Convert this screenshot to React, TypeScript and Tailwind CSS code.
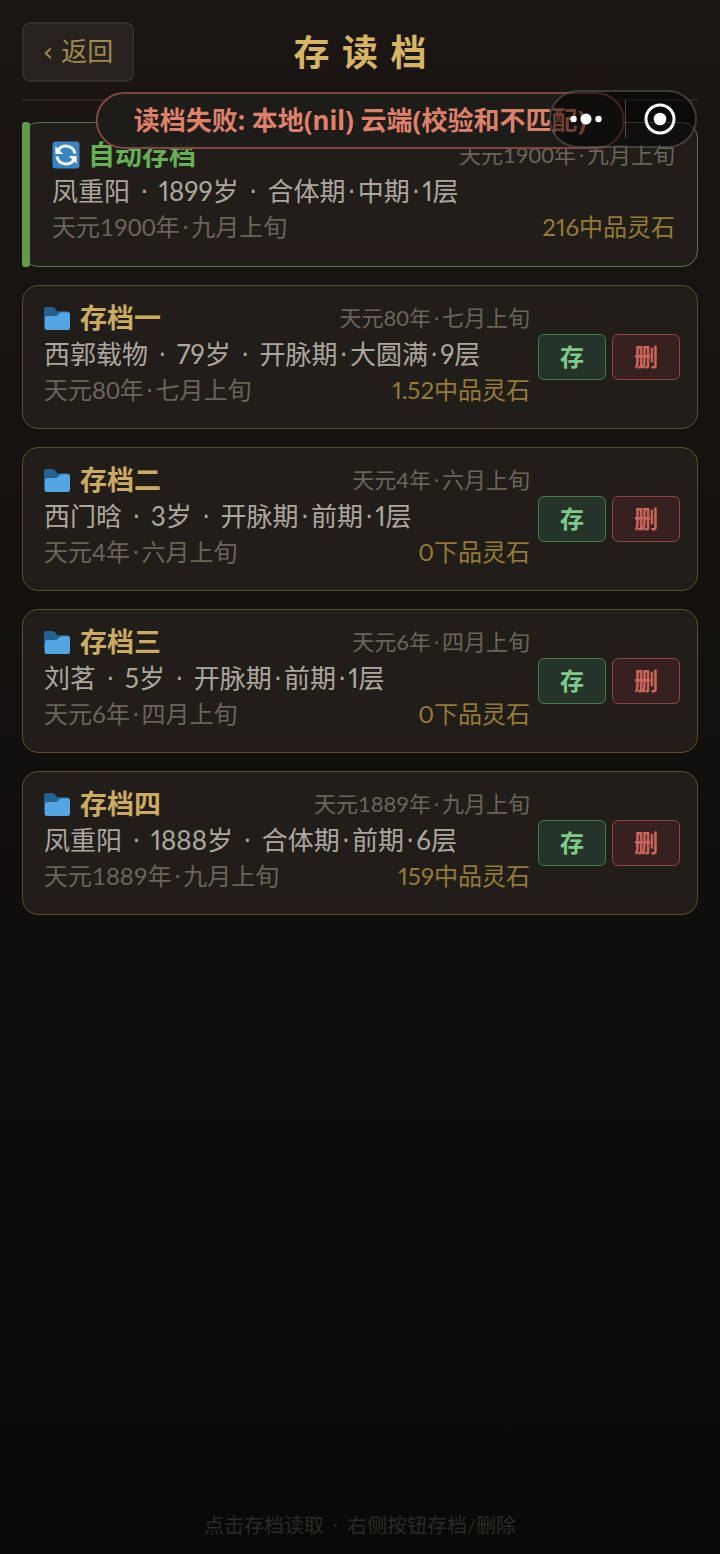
import React from "react";

interface SaveSlot {
  id: number;
  title: string;
  date: string;
  summary: string;
  money: string;
}

const AUTO_SAVE: SaveSlot = {
  id: 0,
  title: "自动存档",
  date: "天元1900年·九月上旬",
  summary: "凤重阳 · 1899岁 · 合体期·中期·1层",
  money: "216中品灵石",
};

const SLOTS: SaveSlot[] = [
  {
    id: 1,
    title: "存档一",
    date: "天元80年·七月上旬",
    summary: "西郭载物 · 79岁 · 开脉期·大圆满·9层",
    money: "1.52中品灵石",
  },
  {
    id: 2,
    title: "存档二",
    date: "天元4年·六月上旬",
    summary: "西门晗 · 3岁 · 开脉期·前期·1层",
    money: "0下品灵石",
  },
  {
    id: 3,
    title: "存档三",
    date: "天元6年·四月上旬",
    summary: "刘茗 · 5岁 · 开脉期·前期·1层",
    money: "0下品灵石",
  },
  {
    id: 4,
    title: "存档四",
    date: "天元1889年·九月上旬",
    summary: "凤重阳 · 1888岁 · 合体期·前期·6层",
    money: "159中品灵石",
  },
];

function SyncIcon() {
  return (
    <svg className="h-7 w-7 shrink-0" viewBox="0 0 28 28" fill="none" aria-hidden="true">
      <rect x="0.5" y="0.5" width="27" height="27" rx="3" fill="#3b84c4" />
      <path d="M5.6 10.4A9.2 9.2 0 0 1 23 12.6" stroke="#f1f5f8" strokeWidth="3" />
      <path d="M22.4 17.6A9.2 9.2 0 0 1 5 15.4" stroke="#f1f5f8" strokeWidth="3" />
      <path d="M3.4 5V13H11.4Z" fill="#f1f5f8" />
      <path d="M24.6 23V15H16.6Z" fill="#f1f5f8" />
    </svg>
  );
}

function FolderIcon() {
  return (
    <svg className="h-7 w-7 shrink-0" viewBox="0 0 28 28" aria-hidden="true">
      <path
        d="M0 5.5Q0 3 2.5 3H8.5Q10.4 3 11.4 4.8L13 7.2H23Q26 7.2 26 10V20H0Z"
        fill="#25608f"
      />
      <path
        d="M1 14.5Q1 12 3.5 12H11.5Q13.2 12 14.2 10.4Q15.6 8.2 18 8.2H23.5Q26 8.2 26 10.7V23.5Q26 26 23.5 26H3Q0.5 26 0.5 23.5Z"
        fill="#55a5e5"
      />
    </svg>
  );
}

// Gives the middle dots a bit more air than the text font does
function DottedText({ text }: { text: string }) {
  return (
    <>
      {text.split(/( ?· ?)/).map((part, i) =>
        part.includes("·") ? (
          <span key={i} className="px-[2px] font-['DejaVu_Sans',sans-serif]">
            {part}
          </span>
        ) : (
          <React.Fragment key={i}>{part}</React.Fragment>
        )
      )}
    </>
  );
}

interface SaveInfoProps {
  slot: SaveSlot;
  icon: React.ReactNode;
  titleClassName: string;
}

function SaveInfo({ slot, icon, titleClassName }: SaveInfoProps) {
  return (
    <button type="button" className="block min-w-0 flex-1 cursor-pointer text-left">
      <span className="flex h-9 items-center justify-between">
        <span className={`flex items-center gap-2 text-[27px] font-bold ${titleClassName}`}>
          {icon}
          {slot.title}
        </span>
        <span className="text-[22px] text-[#6b645b]">
          <DottedText text={slot.date} />
        </span>
      </span>
      <span className="block h-9 text-[26px] leading-9 whitespace-nowrap text-[#aca69f] proportional-nums">
        <DottedText text={slot.summary} />
      </span>
      <span className="flex h-9 items-center justify-between text-[24px]">
        <span className="text-[#6b645b]">
          <DottedText text={slot.date} />
        </span>
        <span className="text-[#957a38] proportional-nums">{slot.money}</span>
      </span>
    </button>
  );
}

function SlotCard({ slot }: { slot: SaveSlot }) {
  return (
    <li className="flex items-center gap-2 rounded-2xl border border-[#5a4c2d] bg-[#211e1a] pt-[14px] pr-[17px] pb-5 pl-[21px]">
      <SaveInfo slot={slot} icon={<FolderIcon />} titleClassName="text-[#cbab62]" />
      <div className="mt-[6px] flex gap-[6px] text-[24px] font-bold">
        <button
          type="button"
          className="h-[46px] w-[68px] rounded-md border border-[#437a4b] bg-[#263328] leading-none text-[#7fc98b]"
        >
          存
        </button>
        <button
          type="button"
          className="h-[46px] w-[68px] rounded-md border border-[#8c4541] bg-[#372120] leading-none text-[#cb665d]"
        >
          删
        </button>
      </div>
    </li>
  );
}

function SystemCapsule() {
  return (
    <div className="absolute top-[90px] right-[23px] flex h-[58px] w-[148px] items-center rounded-full border-2 border-white/20 bg-black/50">
      <button type="button" aria-label="更多" className="flex h-full flex-1 items-center justify-center pr-1">
        <svg className="h-3 w-8" viewBox="0 0 32 12" fill="#fff" aria-hidden="true">
          <circle cx="3.5" cy="6" r="3.2" />
          <circle cx="16" cy="6" r="5.5" />
          <circle cx="28.5" cy="6" r="3.2" />
        </svg>
      </button>
      <span className="h-[38px] w-px bg-white/25" />
      <button type="button" aria-label="关闭" className="flex h-full flex-1 items-center justify-center">
        <svg className="h-8 w-8" viewBox="0 0 32 32" aria-hidden="true">
          <circle cx="16" cy="16" r="14" fill="none" stroke="#fff" strokeWidth="3" />
          <circle cx="16" cy="16" r="6.3" fill="#fff" />
        </svg>
      </button>
    </div>
  );
}

export default function App() {
  return (
    <div className="relative flex min-h-screen flex-col bg-linear-to-b from-[#1b1613] to-[#090908] px-[22px] pt-[22px] font-[Lato,'Noto_Sans_CJK_SC',sans-serif]">
      <header className="grid grid-cols-[1fr_auto_1fr] items-center border-b-2 border-[#2a2621] pb-[17px]">
        <button
          type="button"
          className="h-[60px] w-28 justify-self-start rounded-lg border-2 border-[#332e26] bg-[#27221d] font-['DejaVu_Sans','Noto_Sans_CJK_SC',sans-serif] text-[26px] leading-none text-[#a08a52]"
        >
          ‹ 返回
        </button>
        <h1 className="pt-1 font-['DejaVu_Sans','Noto_Sans_CJK_SC',sans-serif] text-[36px] leading-none font-bold text-[#d6b562]">
          存 读 档
        </h1>
      </header>

      <main className="mt-[21px] flex flex-col gap-[18px]">
        {/* Auto save, can only be loaded */}
        <section className="relative flex rounded-2xl border border-[#5c6e50] bg-[#211e1a] pt-[14px] pr-[22px] pb-[21px] pl-[29px]">
          <span className="absolute -inset-y-px -left-px w-2 rounded-[3px] bg-[#64994b]" />
          <SaveInfo slot={AUTO_SAVE} icon={<SyncIcon />} titleClassName="text-[#68b055]" />
        </section>

        <ul className="flex flex-col gap-[18px]">
          {SLOTS.map((slot) => (
            <SlotCard key={slot.id} slot={slot} />
          ))}
        </ul>
      </main>

      <footer className="mt-auto pb-3 text-center text-[20px] leading-8 text-[#2d2a26]">
        <DottedText text="点击存档读取 · 右侧按钮存档/删除" />
      </footer>

      {/* Toast */}
      <div
        role="alert"
        className="absolute top-[92px] left-1/2 flex h-[57px] -translate-x-1/2 items-center rounded-full border-2 border-[#7e4640] bg-[#1f1c18]/95 px-9 font-['Noto_Sans','Noto_Sans_CJK_SC',sans-serif] text-[26px] font-bold whitespace-nowrap text-[#dd806c]"
      >
        读档失败: 本地(nil) 云端(校验和不匹配)
      </div>

      <SystemCapsule />
    </div>
  );
}
